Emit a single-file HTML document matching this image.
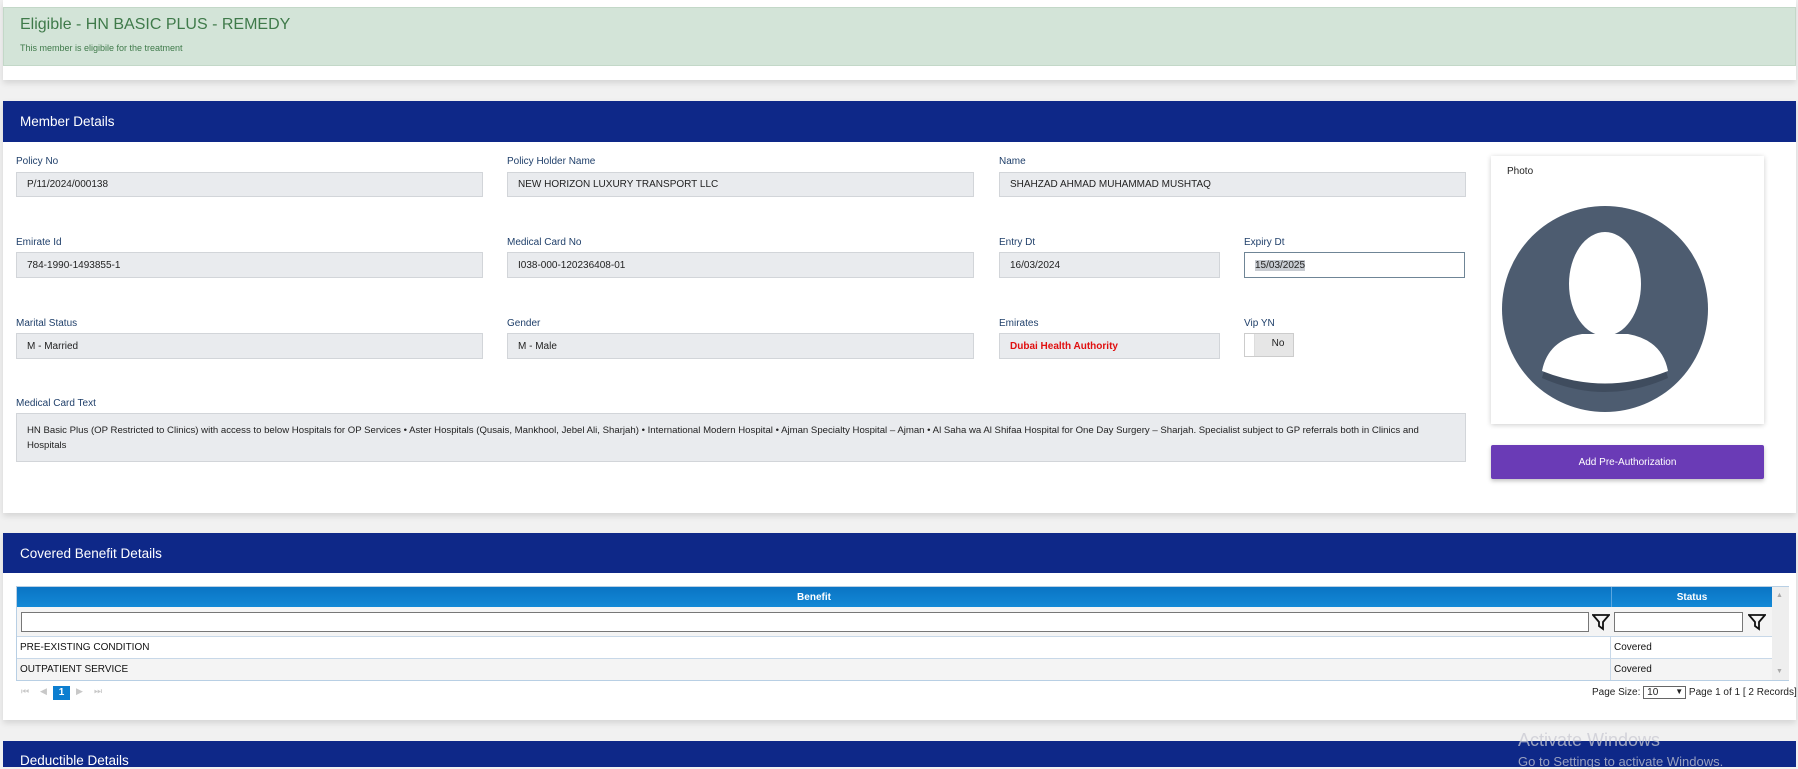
<!DOCTYPE html>
<html><head><meta charset="utf-8"><style>
*{box-sizing:border-box;margin:0;padding:0}
body{width:1798px;height:767px;overflow:hidden;background:#f1f1f1;font-family:"Liberation Sans",sans-serif;position:relative}
.abs{position:absolute}
.card{position:absolute;left:3px;width:1793px;background:#fff;box-shadow:0 3px 6px rgba(0,0,0,.12)}
.band{position:absolute;left:3px;width:1793px;background:#0e2888;color:#fff;font-size:13.5px;padding-left:17px;display:flex;align-items:center}
.lbl{position:absolute;font-size:10px;color:#1f3f6a}
.inp{position:absolute;background:#e9ebee;border:1px solid #d2d5d9;font-size:10px;color:#222;padding-left:10px;display:flex;align-items:center}
.gh{position:absolute;background:linear-gradient(#0a74c4,#1389d6);color:#fff;font-size:10px;font-weight:bold;display:flex;align-items:center;justify-content:center}
.row{position:absolute;font-size:10px;color:#111;display:flex;align-items:center;padding-left:3px;border-bottom:1px solid #c8d8e8}
.fbox{position:absolute;height:20px;border:1px solid #777;background:#fff}
</style></head><body>
<div class="card" style="top:0;height:80px"></div>
<div class="abs" style="left:3px;top:7px;width:1793px;height:59px;background:#d3e4d8;border:1px solid #c3d8c8"></div>
<div class="abs" style="left:20px;top:16px;font-size:16px;color:#3f7a4a">Eligible - HN BASIC PLUS - REMEDY</div>
<div class="abs" style="left:20px;top:43px;font-size:9px;color:#3f7a4a">This member is eligibile for the treatment</div>

<div class="card" style="top:101px;height:412px"></div>
<div class="band" style="top:101px;height:41px">Member Details</div>

<div class="lbl" style="left:16px;top:156px">Policy No</div>
<div class="inp" style="left:16px;top:172px;width:467px;height:25px">P/11/2024/000138</div>
<div class="lbl" style="left:507px;top:156px">Policy Holder Name</div>
<div class="inp" style="left:507px;top:172px;width:467px;height:25px">NEW HORIZON LUXURY TRANSPORT LLC</div>
<div class="lbl" style="left:999px;top:156px">Name</div>
<div class="inp" style="left:999px;top:172px;width:467px;height:25px">SHAHZAD AHMAD MUHAMMAD MUSHTAQ</div>

<div class="lbl" style="left:16px;top:237px">Emirate Id</div>
<div class="inp" style="left:16px;top:252px;width:467px;height:26px">784-1990-1493855-1</div>
<div class="lbl" style="left:507px;top:237px">Medical Card No</div>
<div class="inp" style="left:507px;top:252px;width:467px;height:26px">I038-000-120236408-01</div>
<div class="lbl" style="left:999px;top:237px">Entry Dt</div>
<div class="inp" style="left:999px;top:252px;width:221px;height:26px">16/03/2024</div>
<div class="lbl" style="left:1244px;top:237px">Expiry Dt</div>
<div class="inp" style="left:1244px;top:252px;width:221px;height:26px;background:#fff;border:1px solid #6f8596"><span style="background:#c8ccd2">15/03/2025</span></div>

<div class="lbl" style="left:16px;top:318px">Marital Status</div>
<div class="inp" style="left:16px;top:333px;width:467px;height:26px">M - Married</div>
<div class="lbl" style="left:507px;top:318px">Gender</div>
<div class="inp" style="left:507px;top:333px;width:467px;height:26px">M - Male</div>
<div class="lbl" style="left:999px;top:318px">Emirates</div>
<div class="inp" style="left:999px;top:333px;width:221px;height:26px;color:#e01010;font-weight:bold">Dubai Health Authority</div>
<div class="lbl" style="left:1244px;top:318px">Vip YN</div>
<div class="abs" style="left:1244px;top:333px;width:50px;height:24px;background:#e6e6e6;border:1px solid #ccc;font-size:10px;color:#222;text-align:center;line-height:20px;padding-left:18px">No<div class="abs" style="left:0;top:0;width:10px;height:22px;background:#fff;border-right:1px solid #ddd"></div></div>

<div class="lbl" style="left:16px;top:398px">Medical Card Text</div>
<div class="inp" style="left:16px;top:413px;width:1450px;height:49px;display:block;padding:9px 10px;line-height:15px;font-size:9.6px">HN Basic Plus (OP Restricted to Clinics) with access to below Hospitals for OP Services • Aster Hospitals (Qusais, Mankhool, Jebel Ali, Sharjah) • International Modern Hospital • Ajman Specialty Hospital – Ajman • Al Saha wa Al Shifaa Hospital for One Day Surgery – Sharjah. Specialist subject to GP referrals both in Clinics and Hospitals</div>

<div class="abs" style="left:1491px;top:156px;width:273px;height:268px;background:#fff;box-shadow:0 1px 5px rgba(0,0,0,.2)">
<div class="abs" style="left:16px;top:10px;font-size:10px;color:#222">Photo</div>
<svg class="abs" style="left:11px;top:50px" width="206" height="206" viewBox="0 0 206 206">
<circle cx="103" cy="103" r="103" fill="#4d5c70"/>
<path d="M40 172 Q48 140 80 132 L126 132 Q158 140 166 172 Q103 200 40 172Z" fill="#3f4c5e"/>
<path d="M40 165 Q46 134 80 128 L126 128 Q160 134 166 165 Q103 190 40 165Z" fill="#fff"/>
<ellipse cx="103" cy="78" rx="36" ry="52" fill="#fff"/>
</svg>
</div>
<div class="abs" style="left:1491px;top:445px;width:273px;height:34px;background:#6a3bb6;color:#fff;font-size:10px;display:flex;align-items:center;justify-content:center;border-radius:2px;box-shadow:0 2px 4px rgba(0,0,0,.25)">Add Pre-Authorization</div>

<div class="card" style="top:533px;height:187px"></div>
<div class="band" style="top:533px;height:40px">Covered Benefit Details</div>
<div class="abs" style="left:16px;top:586px;width:1773px;height:95px;border:1px solid #b8cfe4;background:#fff"></div>
<div class="gh" style="left:17px;top:587px;width:1594px;height:20px">Benefit</div>
<div class="gh" style="left:1611px;top:587px;width:161px;height:20px;border-left:1px solid #5aa6e0">Status</div>
<div class="abs" style="left:1772px;top:587px;width:17px;height:93px;background:#eee"></div>
<div class="abs" style="left:1776px;top:592px;font-size:7px;color:#aaa">▲</div>
<div class="abs" style="left:1776px;top:668px;font-size:7px;color:#aaa">▼</div>
<div class="abs" style="left:17px;top:607px;width:1755px;height:30px;background:#f4f4f4;border-bottom:1px solid #c8d8e8"></div>
<div class="fbox" style="left:21px;top:612px;width:1568px"></div>
<svg class="abs" style="left:1592px;top:613px" width="18" height="18" viewBox="0 0 18 18"><path d="M1 2H17L11 9V16L7 13V9Z" fill="none" stroke="#111" stroke-width="1.8"/></svg>
<div class="fbox" style="left:1614px;top:612px;width:129px"></div>
<svg class="abs" style="left:1748px;top:613px" width="18" height="18" viewBox="0 0 18 18"><path d="M1 2H17L11 9V16L7 13V9Z" fill="none" stroke="#111" stroke-width="1.8"/></svg>
<div class="row" style="left:17px;top:637px;width:1594px;height:22px;border-right:1px solid #c8d8e8">PRE-EXISTING CONDITION</div>
<div class="row" style="left:1611px;top:637px;width:161px;height:22px">Covered</div>
<div class="row" style="left:17px;top:659px;width:1594px;height:21px;background:#f4f4f4;border-right:1px solid #c8d8e8;border-bottom:none">OUTPATIENT SERVICE</div>
<div class="row" style="left:1611px;top:659px;width:161px;height:21px;background:#f4f4f4;border-bottom:none">Covered</div>

<div class="abs" style="left:21px;top:686px;font-size:9px;color:#c8c8c8">⏮</div>
<div class="abs" style="left:40px;top:686px;font-size:9px;color:#c8c8c8">◀</div>
<div class="abs" style="left:53px;top:686px;width:17px;height:14px;background:#0c7ed0;color:#fff;font-size:10px;font-weight:bold;text-align:center;line-height:14px">1</div>
<div class="abs" style="left:76px;top:686px;font-size:9px;color:#c8c8c8">▶</div>
<div class="abs" style="left:94px;top:686px;font-size:9px;color:#c8c8c8">⏭</div>
<div class="abs" style="left:1592px;top:686px;font-size:10px;color:#222;white-space:nowrap">Page Size: <span style="display:inline-block;width:43px;border:1px solid #666;padding-left:3px;font-size:10px">10 <span style="float:right;font-size:8px;padding-right:2px">▼</span></span> Page 1 of 1 [ 2 Records]</div>

<div class="band" style="top:741px;height:26px;align-items:flex-start;padding-top:12px">Deductible Details</div>
<div class="abs" style="left:1518px;top:730px;font-size:18px;color:rgba(200,200,210,.75)">Activate Windows</div>
<div class="abs" style="left:1518px;top:754px;font-size:13px;color:rgba(200,200,210,.75)">Go to Settings to activate Windows.</div>
</body></html>
